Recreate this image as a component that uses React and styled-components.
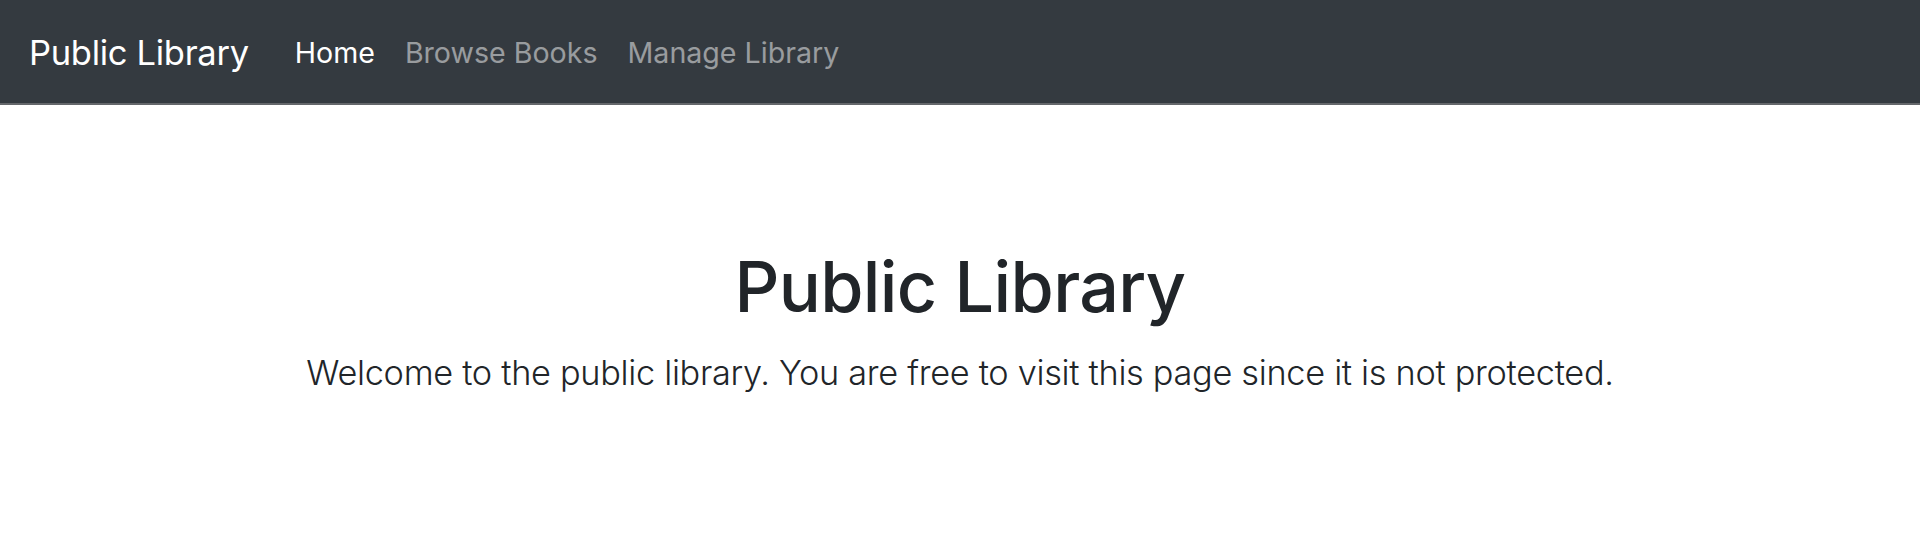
import styled, { createGlobalStyle } from "styled-components";

const GlobalStyle = createGlobalStyle`
  body {
    margin: 0;
    background: #fff;
    font-family: Inter, "Noto Sans", sans-serif;
    color: #212529;
  }
`;

const Navbar = styled.nav`
  display: flex;
  align-items: center;
  height: 105px;
  padding: 2px 29px 0;
  box-sizing: border-box;
  background: #343a40;
  border-bottom: 2px solid #64676b;
`;

const Brand = styled.a`
  font-size: 34.5px;
  color: #fff;
  text-decoration: none;
  margin-right: 31px;
  letter-spacing: -0.3px;
`;

const NavList = styled.div`
  display: flex;
  align-items: center;
`;

const NavLink = styled.a`
  font-size: 28.6px;
  padding: 0 15px;
  color: ${(p) => (p.$active ? "#fff" : "rgba(255, 255, 255, 0.5)")};
  text-decoration: none;
`;

const Hero = styled.main`
  display: flex;
  flex-direction: column;
  align-items: center;
  padding-top: 140px;
`;

const Title = styled.h1`
  margin: 0;
  font-size: 70px;
  font-weight: 500;
  line-height: 1.2;
  letter-spacing: -0.65px;
`;

const Lead = styled.p`
  margin: 23px 0 0;
  font-size: 34.3px;
  font-weight: 300;
  letter-spacing: -0.3px;
`;

export default function App() {
  return (
    <>
      <GlobalStyle />
      <Navbar>
        <Brand href="#">Public Library</Brand>
        <NavList>
          <NavLink href="#" $active>
            Home
          </NavLink>
          <NavLink href="#">Browse Books</NavLink>
          <NavLink href="#">Manage Library</NavLink>
        </NavList>
      </Navbar>
      <Hero>
        <Title>Public Library</Title>
        <Lead>
          Welcome to the public library. You are free to visit this page since it is not protected.
        </Lead>
      </Hero>
    </>
  );
}
